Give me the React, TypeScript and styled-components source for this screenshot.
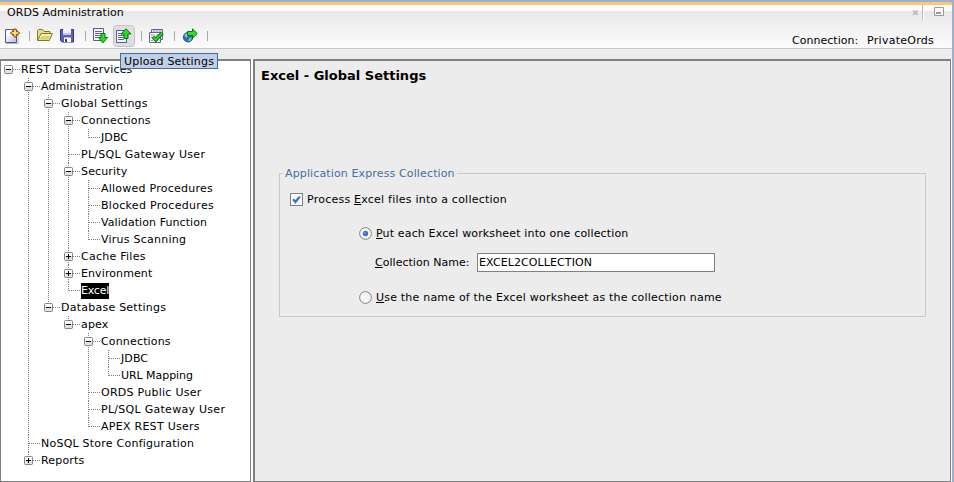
import React from 'react';
import styled, { createGlobalStyle } from 'styled-components';

const Global = createGlobalStyle`
  * { box-sizing: border-box; }
  body { margin: 0; background: #ececec; font: 11px/17px "DejaVu Sans", sans-serif; color: #000; }
  u { text-decoration: underline; text-decoration-thickness: 1px; text-underline-offset: 1px; text-decoration-skip-ink: none; }
`;

const Window = styled.div`
  width: 954px; height: 482px; overflow: hidden;
  display: flex; flex-direction: column;
  background: #ececec; border-right: 2px solid #9ab2d2;
  white-space: nowrap;
`;
const Text = styled.span<{ $track: number }>`
  letter-spacing: ${p => p.$track}px;
`;
const TopEdge = styled.div`
  flex: none; height: 5px; background: #9ab2d2; padding-top: 2px;
  &::after { content: ''; display: block; height: 3px; background: #ffc870; border-top-right-radius: 2px; }
`;
const Header = styled.header`
  flex: none; height: 44px; display: flex; flex-direction: column;
  background: linear-gradient(#fff 6px, #e8e8e8 6px, #fcfcfc 43px);
  border-bottom: 1px solid #c6c6c6;
`;
const TitleBar = styled.div`
  height: 16px; display: flex; align-items: flex-start; justify-content: space-between;
  padding-left: 7px; line-height: 16px; flex: none;
`;
const TitleControls = styled.svg`
  width: 42px; height: 16px; display: block;
`;
const ToolBar = styled.div`
  flex: 1; display: flex; align-items: flex-start; padding-left: 1px;
`;
const Tool = styled.div<{ $hot?: boolean; $gap?: number }>`
  width: 22px; height: 22px; margin: 4px 0 0 ${p => p.$gap ?? 0}px;
  display: flex; align-items: center; justify-content: center; flex: none;
  border: 1px solid ${p => (p.$hot ? '#c2c2c8' : 'transparent')};
  background: ${p => (p.$hot ? '#dedee2' : 'transparent')};
  border-radius: 4px;
`;
const Divider = styled.i<{ $l: number; $r?: number }>`
  width: 1px; height: 10px; background: #aaa; flex: none;
  margin: 10px ${p => p.$r ?? 0}px 0 ${p => p.$l}px;
`;
const Icon = styled.svg`
  width: 16px; height: 16px; display: block; flex: none;
`;
const Connection = styled.div`
  display: flex; justify-content: space-between; width: 142px; margin: 11px 18px 0 auto; line-height: 17px;
`;
const ToolTip = styled.div`
  position: absolute; left: 120px; top: 53px; width: 98px; height: 16px;
  border: 1px solid #3f6ea6; background: #bfcfe6; line-height: 15px; padding-left: 3px;
  white-space: nowrap;
`;
const Body = styled.div`
  flex: 1; min-height: 0; display: flex; border-top: 10px solid #ececec; background: #fff;
`;
const TreePanel = styled.div`
  width: 251px; border: 1px solid #808080; border-top-width: 2px; background: #fff; flex: none;
`;
const Pane = styled.div`
  width: 698px; margin-left: 2px; flex: none; background: #ececec;
  border: 1px solid #808080; border-width: 2px 1px 1px 2px;
`;
const Heading = styled.h1`
  margin: 6px 0 0 6px; font-size: 13px; line-height: 18px; font-weight: bold;
`;

const List = styled.div<{ $root?: boolean }>`
  padding-left: ${p => (p.$root ? 0 : 20)}px;
`;
const Item = styled.div<{ $line: 'none' | 'half' | 'full' }>`
  background: repeating-linear-gradient(#808080 0 1px, transparent 1px 2px) 7px 0 / 1px
    ${p => ({ none: '0', half: '9px', full: '100%' })[p.$line]} no-repeat;
`;
const Row = styled.div`
  height: 17px; display: flex; align-items: center; padding-left: 3px;
`;
const Toggle = styled.svg`
  width: 9px; height: 9px; flex: none; display: block;
`;
const Dots = styled.i<{ $w: number; $l?: number }>`
  width: ${p => p.$w}px; height: 1px; flex: none; margin: 0 1px 0 ${p => p.$l ?? 0}px;
  background: repeating-linear-gradient(90deg, #808080 0 1px, transparent 1px 2px);
`;
const NodeText = styled.span<{ $sel?: boolean; $track: number }>`
  height: 16px; line-height: 16px; letter-spacing: ${p => p.$track}px;
  color: ${p => (p.$sel ? '#fff' : '#000')};
  background: ${p => (p.$sel ? '#000' : 'transparent')};
`;

type Node = { t: string; track: number; closed?: boolean; sel?: boolean; kids?: Node[] };
const tree: Node[] = [
  { t: 'REST Data Services', track: 0.2, kids: [
    { t: 'Administration', track: 0.11, kids: [
      { t: 'Global Settings', track: 0.2, kids: [
        { t: 'Connections', track: 0.16, kids: [{ t: 'JDBC', track: 0.1 }] },
        { t: 'PL/SQL Gateway User', track: 0.28 },
        { t: 'Security', track: 0.15, kids: [
          { t: 'Allowed Procedures', track: 0.24 },
          { t: 'Blocked Procedures', track: 0.3 },
          { t: 'Validation Function', track: 0.08 },
          { t: 'Virus Scanning', track: 0.25 },
        ] },
        { t: 'Cache Files', track: 0.26, closed: true },
        { t: 'Environment', track: 0.1, closed: true },
        { t: 'Excel', track: -0.2, sel: true },
      ] },
      { t: 'Database Settings', track: 0.24, kids: [
        { t: 'apex', track: 0.15, kids: [
          { t: 'Connections', track: 0.16, kids: [{ t: 'JDBC', track: 0.1 }, { t: 'URL Mapping', track: -0.05 }] },
          { t: 'ORDS Public User', track: 0.26 },
          { t: 'PL/SQL Gateway User', track: 0.28 },
          { t: 'APEX REST Users', track: 0.27 },
        ] },
      ] },
    ] },
    { t: 'NoSQL Store Configuration', track: 0.23 },
    { t: 'Reports', track: 0.18, closed: true },
  ] },
];

function Branch({ nodes, root }: { nodes: Node[]; root?: boolean }) {
  return (
    <List $root={root}>
      {nodes.map((n, i) => (
        <Item key={n.t} $line={root ? 'none' : i === nodes.length - 1 ? 'half' : 'full'}>
          <Row>
            {n.kids || n.closed ? (
              <>
                <Toggle viewBox="0 0 9 9">
                  <rect x=".5" y=".5" width="8" height="8" rx="1" fill="#e4e1da" stroke="#858585" />
                  <path d="M1 1h7v3H1z" fill="#fff" />
                  <path d={n.closed ? 'M2 4h5v1H2zM4 2h1v5H4z' : 'M2 4h5v1H2z'} fill="#000" />
                </Toggle>
                <Dots $w={7} />
              </>
            ) : (
              <Dots $w={11} $l={5} />
            )}
            <NodeText $sel={n.sel} $track={n.track}>{n.t}</NodeText>
          </Row>
          {n.kids && <Branch nodes={n.kids} />}
        </Item>
      ))}
    </List>
  );
}

const Group = styled.fieldset`
  margin: 82px 24px 0 24px; width: 647px; height: 150px; padding: 0; min-width: 0;
  border: 1px solid #c8c8c8;
`;
const Legend = styled.legend`
  margin-left: 3px; padding: 0 2px; height: 13px; line-height: 14px; color: #3f6fa5;
`;
const Field = styled.label<{ $x: number; $y: number; $g?: number }>`
  display: flex; align-items: center; height: 19px;
  margin: ${p => p.$y}px 0 0 ${p => p.$x}px; gap: ${p => p.$g ?? 4}px;
`;
const CaptionText = styled(Text)<{ $w: number }>`
  width: ${p => p.$w}px;
`;
const Mark = styled.svg`
  width: 13px; height: 13px; display: block; flex: none;
`;
const Input = styled.input`
  width: 238px; height: 19px; border: 1px solid #808080; border-radius: 0; outline: 0; background: #fff;
  padding: 0 1px; font: inherit; color: #000; letter-spacing: 0.1px;
`;

const CheckMark = () => (
  <Mark viewBox="0 0 13 13">
    <rect x=".5" y=".5" width="12" height="12" fill="#fafafa" stroke="#808080" />
    <path d="M3.2 6.2 5.4 9 9.8 3.6" fill="none" stroke="#3a6cc0" strokeWidth="2.2" />
  </Mark>
);
const RadioMark = ({ on }: { on?: boolean }) => (
  <Mark viewBox="0 0 13 13">
    <circle cx="6.5" cy="6.5" r="5.9" fill="#f6f6f6" stroke="#808080" />
    {on && <circle cx="6.5" cy="6.5" r="2.7" fill="#3d70c4" />}
    {on && <circle cx="5.9" cy="5.7" r="1" fill="#86a8e0" />}
  </Mark>
);

const NewIcon = () => (
  <Icon viewBox="0 0 16 16">
    <defs>
      <linearGradient id="sheet" x1="0" y1="0" x2="1" y2="1">
        <stop offset=".2" stopColor="#fff" /><stop offset="1" stopColor="#b9bbe8" />
      </linearGradient>
    </defs>
    <path d="M2 15.5h12V5" fill="none" stroke="#b8b8b8" />
    <path d="M1.5 1.500h11v13h-11z" fill="url(#sheet)" stroke="#54548c" />
    <path d="m11 .5 1.500 1.500v1.500H14L15.500 5 14 6.500h-1.500V8L11 9.500 9.500 8V6.500H8L6.500 5 8 3.500h1.500V2z" fill="#f8a418" stroke="#843c10" />
    <path d="M11 2.500v5M8.500 5h5" stroke="#fff080" strokeWidth="1.400" />
    <path d="M8.500 2.500h1M12.500 2.500h1M8.500 7.500h1M12.500 7.500h1" stroke="#c87820" />
  </Icon>
);
const FolderIcon = () => (
  <Icon viewBox="0 0 16 16">
    <path d="M.5 12.500V2.500l1-1h4l1.500 2h6v3" fill="#e8e08c" stroke="#827a28" />
    <path d="M.7 12.500 4 5.500h11.300l-3 7z" fill="#f4efae" stroke="#827a28" />
    <path d="M2.700 11.800 5 8h8.300L11.500 11.800z" fill="#dcd27a" />
  </Icon>
);
const SaveIcon = () => (
  <Icon viewBox="0 0 16 16">
    <path d="M1.500 1.500h13v12.500H3l-1.500-1.500z" fill="#5c5fc4" stroke="#35357c" />
    <path d="M4 1h8v6H4z" fill="#f4f4fc" />
    <path d="M4 5h8v2H4z" fill="#c2c4ec" />
    <path d="M5 9.500h7v4.500H5z" fill="#fff" />
    <path d="M6 11h2v3H6z" fill="#35357c" />
  </Icon>
);
const ReportLines = () => (
  <>
    <path d="M.5 .5h10v12H.5z" fill="#f4f4fd" stroke="#5c5c88" />
    <path d="M2 3.500h7M2 5.500h7M2 7.500h7M2 9.500h6" stroke="#6464a0" />
  </>
);
const DownloadIcon = () => (
  <Icon viewBox="0 0 16 16">
    <g transform="translate(1 0)"><ReportLines /></g>
    <path d="M9 5.500h4v4h2.500L11 14.800 6.500 9.500H9z" fill="#24e020" stroke="#08700c" />
  </Icon>
);
const UploadIcon = () => (
  <Icon viewBox="0 0 16 16">
    <g transform="translate(0 2)"><ReportLines /></g>
    <path d="M8 10.500h4v-4.500h3L10 .8 5 6h3z" fill="#24e020" stroke="#08700c" />
  </Icon>
);
const ValidateIcon = () => (
  <Icon viewBox="0 0 16 16">
    <path d="M3.500 1.500h11v10h-11z" fill="#e4e4f4" stroke="#66668e" />
    <path d="M1.500 4.500h11v10h-11z" fill="#fbfbff" stroke="#66668e" />
    <path d="M5 3h8" stroke="#8a8ab8" strokeDasharray="2 1" />
    <path d="M3 7h3M8 7h3M3 9.500h2M3 12.500h2" stroke="#8a8ab8" />
    <path d="m5 8.800 2.800 3L14.300 5" fill="none" stroke="#08700c" strokeWidth="3.800" />
    <path d="m5.400 9.200 2.400 2.500 6.100-6.300" fill="none" stroke="#2ce028" strokeWidth="1.900" />
  </Icon>
);
const GlobeIcon = () => (
  <Icon viewBox="0 0 16 16">
    <circle cx="6.100" cy="9.200" r="4.800" fill="#2d6fae" stroke="#204a80" strokeWidth=".8" />
    <path d="M2.300 7.500 5 5.500l1.500 2-2 2.500zM7 10l3-.5-1.500 3.500H6.500z" fill="#6cc7b8" />
    <path d="M3 7.500 5 6" stroke="#c6ecf8" />
    <path d="M5.500 3.500h5V.9l4.700 4.600-4.700 4.600V7.500h-5z" fill="#2ce028" stroke="#08700c" />
  </Icon>
);

export default function App() {
  return (
    <>
      <Global />
      <Window>
        <TopEdge />
        <Header>
          <TitleBar>
            <Text $track={0.06}>ORDS Administration</Text>
            <TitleControls viewBox="0 0 42 16">
              <path d="m3 5.500 4.500 4.500m0-4.500L3 10" stroke="#b4b4b4" strokeWidth="1.500" />
              <path d="M12.500 0v15" stroke="#bcbcbc" />
              <path d="M13.500 0v15" stroke="#fff" />
              <path d="M24.500 2.500h9v8h-9z" fill="#fafafa" stroke="#989898" />
              <path d="M26 7h5v2h-5z" fill="#989898" />
            </TitleControls>
          </TitleBar>
          <ToolBar>
            <Tool><NewIcon /></Tool>
            <Divider $l={6} $r={4} />
            <Tool><FolderIcon /></Tool>
            <Tool><SaveIcon /></Tool>
            <Divider $l={7} $r={3} />
            <Tool><DownloadIcon /></Tool>
            <Tool $hot $gap={2}><UploadIcon /></Tool>
            <Divider $l={6} $r={3} />
            <Tool><ValidateIcon /></Tool>
            <Divider $l={7} $r={4} />
            <Tool><GlobeIcon /></Tool>
            <Divider $l={6} />
            <Connection>
              <Text $track={0.03}>Connection:</Text>
              <Text $track={0.26}>PrivateOrds</Text>
            </Connection>
          </ToolBar>
        </Header>
        <Body>
          <TreePanel><Branch nodes={tree} root /></TreePanel>
          <Pane>
            <Heading>Excel - Global Settings</Heading>
            <Group>
              <Legend><Text $track={0.13}>Application Express Collection</Text></Legend>
              <Field $x={10} $y={10}>
                <CheckMark />
                <Text $track={0.23}>Process <u>E</u>xcel files into a collection</Text>
              </Field>
              <Field $x={79} $y={15}>
                <RadioMark on />
                <Text $track={0.15}><u>P</u>ut each Excel worksheet into one collection</Text>
              </Field>
              <Field $x={95} $y={10} $g={7}>
                <CaptionText $w={95} $track={0.03}><u>C</u>ollection Name:</CaptionText>
                <Input defaultValue="EXCEL2COLLECTION" />
              </Field>
              <Field $x={79} $y={16}>
                <RadioMark />
                <Text $track={0.2}><u>U</u>se the name of the Excel worksheet as the collection name</Text>
              </Field>
            </Group>
          </Pane>
        </Body>
      </Window>
      <ToolTip><Text $track={0.2}>Upload Settings</Text></ToolTip>
    </>
  );
}
